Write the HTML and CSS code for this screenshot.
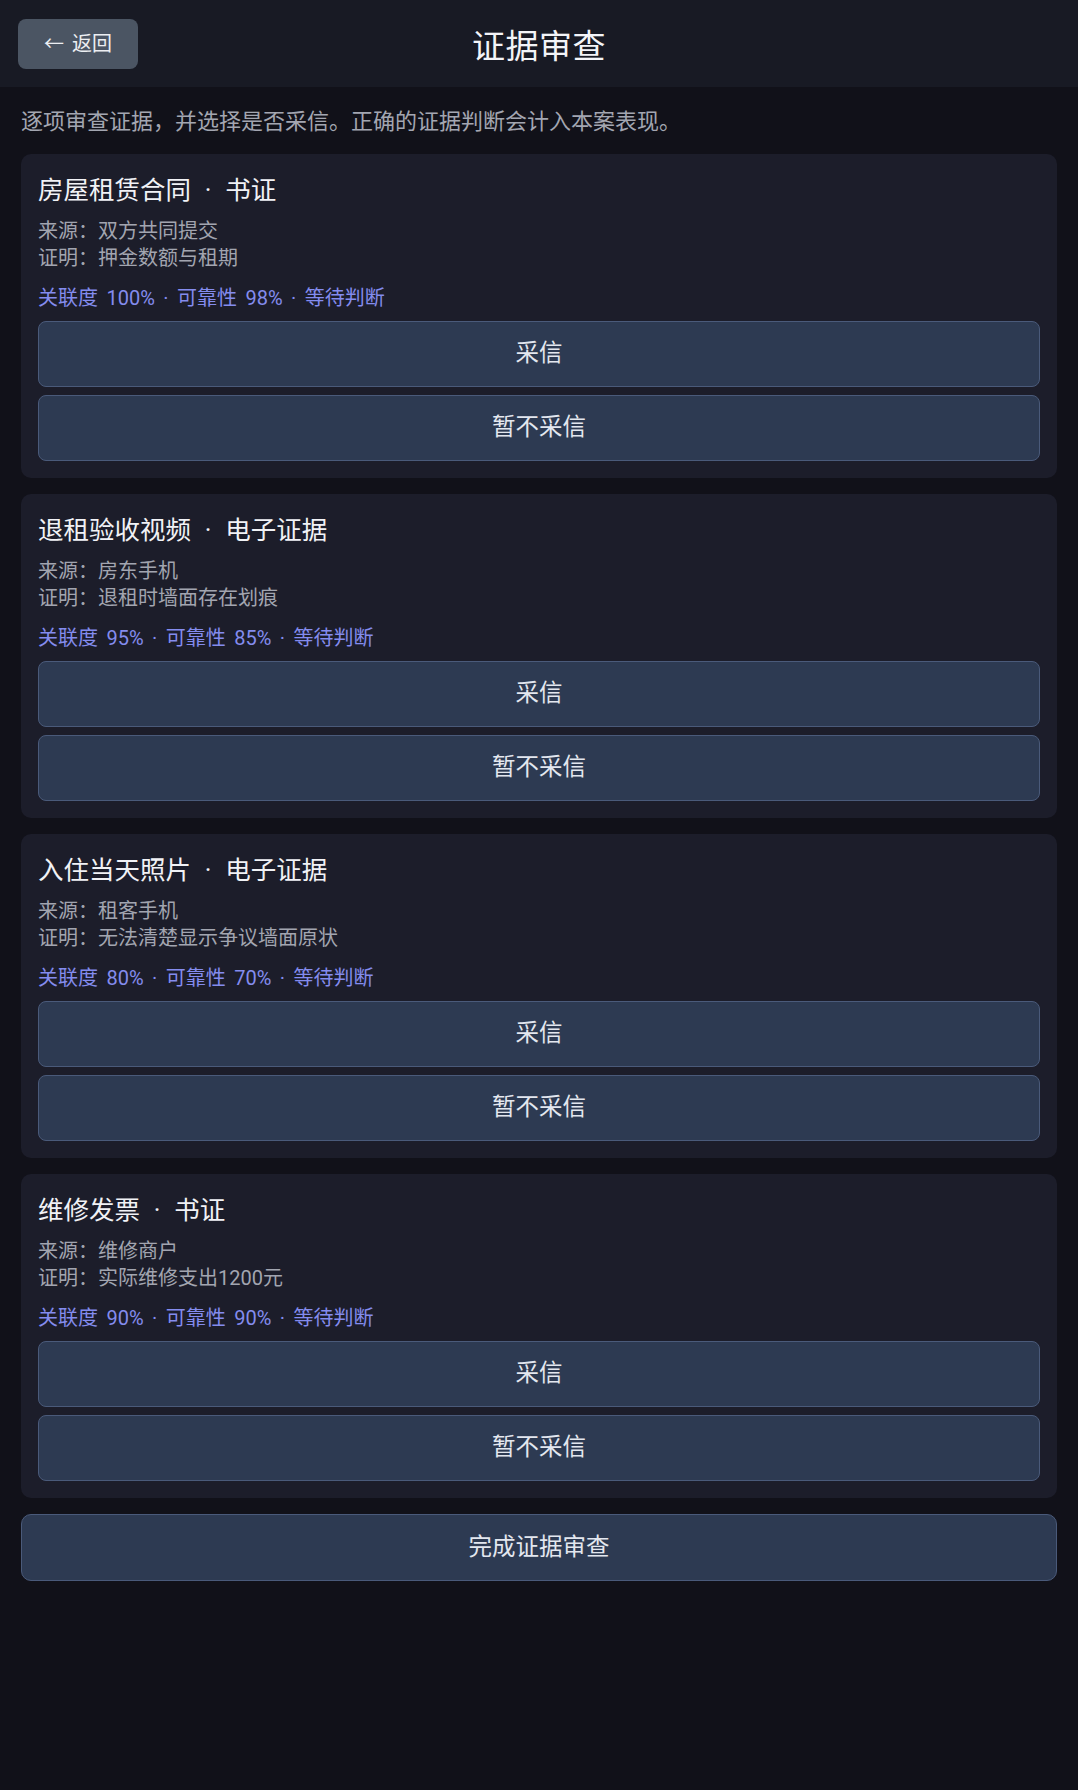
FILE: index.html
```html
<!DOCTYPE html>
<html lang="zh-CN">
<head>
<meta charset="utf-8">
<title>证据审查</title>
<link rel="stylesheet" href="styles.css">
</head>
<body>
<header class="topbar">
  <div class="topbar-left"><button class="back-btn">← 返回</button></div>
  <h1 class="page-title">证据审查</h1>
  <div class="topbar-right"></div>
</header>
<main class="content">
  <p class="intro">逐项审查证据，并选择是否采信。正确的证据判断会计入本案表现。</p>
  <div class="list">
    <section class="card">
      <h2 class="card-title">房屋租赁合同 · 书证</h2>
      <div class="info">
        <div>来源：双方共同提交</div>
        <div>证明：押金数额与租期</div>
      </div>
      <div class="meta">关联度 100% · 可靠性 98% · 等待判断</div>
      <div class="actions">
        <button class="btn">采信</button>
        <button class="btn">暂不采信</button>
      </div>
    </section>
    <section class="card">
      <h2 class="card-title">退租验收视频 · 电子证据</h2>
      <div class="info">
        <div>来源：房东手机</div>
        <div>证明：退租时墙面存在划痕</div>
      </div>
      <div class="meta">关联度 95% · 可靠性 85% · 等待判断</div>
      <div class="actions">
        <button class="btn">采信</button>
        <button class="btn">暂不采信</button>
      </div>
    </section>
    <section class="card">
      <h2 class="card-title">入住当天照片 · 电子证据</h2>
      <div class="info">
        <div>来源：租客手机</div>
        <div>证明：无法清楚显示争议墙面原状</div>
      </div>
      <div class="meta">关联度 80% · 可靠性 70% · 等待判断</div>
      <div class="actions">
        <button class="btn">采信</button>
        <button class="btn">暂不采信</button>
      </div>
    </section>
    <section class="card">
      <h2 class="card-title">维修发票 · 书证</h2>
      <div class="info">
        <div>来源：维修商户</div>
        <div>证明：实际维修支出1200元</div>
      </div>
      <div class="meta">关联度 90% · 可靠性 90% · 等待判断</div>
      <div class="actions">
        <button class="btn">采信</button>
        <button class="btn">暂不采信</button>
      </div>
    </section>
    <button class="btn btn-finish">完成证据审查</button>
  </div>
</main>
</body>
</html>
```
FILE: styles.css
```css
* { box-sizing: border-box; }
html, body {
  margin: 0;
  padding: 0;
  background: #111119;
  color: #e8e9ef;
  font-family: Roboto, "Noto Sans CJK SC", sans-serif;
  font-weight: 400;
}
body { min-height: 1790px; }

.topbar {
  display: grid;
  grid-template-columns: 1fr auto 1fr;
  align-items: center;
  height: 87px;
  padding: 0 18px;
  background: #181a24;
}
.back-btn {
  width: 120px;
  height: 50px;
  border: none;
  border-radius: 8px;
  background: #4b5563;
  color: #eceef2;
  font-family: inherit;
  font-size: 20px;
  line-height: 1;
  padding: 0;
  word-spacing: 3px;
}
.page-title {
  margin: 0;
  font-size: 33px;
  font-weight: 400;
  color: #f3f4f8;
  letter-spacing: 0.5px;
}

.content {
  padding: 19px 21px 0;
}
.intro {
  margin: 0 0 16px;
  font-size: 22px;
  line-height: 32px;
  color: #a3a6b1;
}
.list {
  display: flex;
  flex-direction: column;
  gap: 16px;
}
.card {
  background: #1c1d2a;
  border-radius: 10px;
  padding: 18px 17px 17.5px;
}
.card-title {
  margin: 0 0 10px;
  font-size: 25.5px;
  line-height: 36px;
  font-weight: 400;
  color: #f1f2f6;
  word-spacing: 7.5px;
}
.info {
  font-size: 20px;
  line-height: 27px;
  color: #a2a5b0;
}
.meta {
  margin-top: 13px;
  font-size: 20px;
  line-height: 27px;
  color: #848cee;
  word-spacing: 3.5px;
}
.actions {
  margin-top: 8.5px;
  display: flex;
  flex-direction: column;
  gap: 8px;
}
.btn {
  display: block;
  width: 100%;
  height: 66px;
  border: 1.5px solid #4a5a7a;
  border-radius: 8px;
  background: #2d3a52;
  color: #e3e7ef;
  font-family: inherit;
  font-size: 23.5px;
  line-height: 1;
  padding: 0;
}
.btn-finish {
  height: 67px;
  border-radius: 10px;
}
```
